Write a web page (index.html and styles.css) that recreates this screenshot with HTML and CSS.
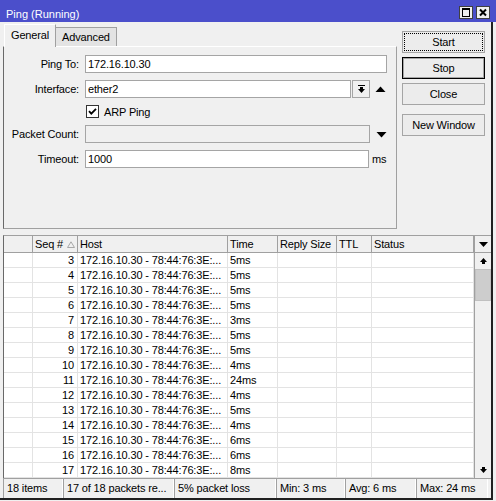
FILE: index.html
```html
<!DOCTYPE html>
<html>
<head>
<meta charset="utf-8">
<link rel="stylesheet" href="styles.css">
</head>
<body>
<div class="window">
  <div class="titlebar">
    <span class="title">Ping (Running)</span>
    <div class="tb-btns">
      <svg class="tb-btn" width="14" height="13" viewBox="0 0 14 13">
        <rect x="0.5" y="0.5" width="13" height="12" fill="#f0f0f0" stroke="#404040"/>
        <rect x="3.5" y="2.5" width="7" height="8" fill="none" stroke="#000"/>
        <rect x="3" y="2" width="8" height="2" fill="#000"/>
      </svg>
      <svg class="tb-btn" width="14" height="13" viewBox="0 0 14 13">
        <rect x="0.5" y="0.5" width="13" height="12" fill="#f0f0f0" stroke="#404040"/>
        <path d="M4 3.5 L10 9.5 M10 3.5 L4 9.5" stroke="#000" stroke-width="2"/>
      </svg>
    </div>
  </div>
  <div class="client">
    <div class="top">
      <div class="tabarea">
        <div class="tabs">
          <div class="tab active">General</div>
          <div class="tab">Advanced</div>
        </div>
        <div class="panel">
          <div class="row">
            <div class="lbl">Ping To:</div>
            <div class="input w-ping">172.16.10.30</div>
          </div>
          <div class="row">
            <div class="lbl">Interface:</div>
            <div class="input w-iface">ether2</div>
            <div class="ddbtn">
              <svg width="9" height="9" viewBox="0 0 9 9"><rect x="1" y="0" width="7" height="1" fill="#000"/><path d="M3 2 H6 V4 H8 L4.5 8 L1 4 H3 Z" fill="#000"/></svg>
            </div>
            <svg class="tri" width="11" height="7" viewBox="0 0 11 7"><path d="M0.5 6 L5.5 0.5 L10.5 6 Z" fill="#000"/></svg>
          </div>
          <div class="row row-check">
            <div class="lbl"></div>
            <svg class="check" width="13" height="13" viewBox="0 0 13 13">
              <rect x="0.5" y="0.5" width="12" height="12" fill="#fff" stroke="#333"/>
              <path d="M3 6.2 L5.3 8.6 L10 3.8" fill="none" stroke="#000" stroke-width="1.8"/>
            </svg>
            <span class="check-lbl">ARP Ping</span>
          </div>
          <div class="row">
            <div class="lbl">Packet Count:</div>
            <div class="input disabled w-count"></div>
            <svg class="tri tri-down" width="11" height="7" viewBox="0 0 11 7"><path d="M0.5 1 L5.5 6.5 L10.5 1 Z" fill="#000"/></svg>
          </div>
          <div class="row">
            <div class="lbl">Timeout:</div>
            <div class="input w-timeout">1000</div>
            <span class="unit">ms</span>
          </div>
        </div>
      </div>
      <div class="btns">
        <div class="btn focus">Start</div>
        <div class="btn default">Stop</div>
        <div class="btn">Close</div>
        <div class="btn btn-new">New Window</div>
      </div>
    </div>
    <div class="table">
      <div class="grid">
        <div class="hdr">
          <div></div>
          <div class="seq-h">Seq #<svg class="sort" width="8" height="7" viewBox="0 0 8 7"><path d="M0.5 6.5 L4 0.8 L7.5 6.5 Z" fill="none" stroke="#a8a8a8"/></svg></div>
          <div>Host</div>
          <div>Time</div>
          <div>Reply Size</div>
          <div>TTL</div>
          <div>Status</div>
        </div>
        <div class="trow"><div></div><div class="num">3</div><div>172.16.10.30 - 78:44:76:3E:...</div><div>5ms</div><div></div><div></div><div></div></div>
        <div class="trow"><div></div><div class="num">4</div><div>172.16.10.30 - 78:44:76:3E:...</div><div>5ms</div><div></div><div></div><div></div></div>
        <div class="trow"><div></div><div class="num">5</div><div>172.16.10.30 - 78:44:76:3E:...</div><div>5ms</div><div></div><div></div><div></div></div>
        <div class="trow"><div></div><div class="num">6</div><div>172.16.10.30 - 78:44:76:3E:...</div><div>5ms</div><div></div><div></div><div></div></div>
        <div class="trow"><div></div><div class="num">7</div><div>172.16.10.30 - 78:44:76:3E:...</div><div>3ms</div><div></div><div></div><div></div></div>
        <div class="trow"><div></div><div class="num">8</div><div>172.16.10.30 - 78:44:76:3E:...</div><div>5ms</div><div></div><div></div><div></div></div>
        <div class="trow"><div></div><div class="num">9</div><div>172.16.10.30 - 78:44:76:3E:...</div><div>5ms</div><div></div><div></div><div></div></div>
        <div class="trow"><div></div><div class="num">10</div><div>172.16.10.30 - 78:44:76:3E:...</div><div>4ms</div><div></div><div></div><div></div></div>
        <div class="trow"><div></div><div class="num">11</div><div>172.16.10.30 - 78:44:76:3E:...</div><div>24ms</div><div></div><div></div><div></div></div>
        <div class="trow"><div></div><div class="num">12</div><div>172.16.10.30 - 78:44:76:3E:...</div><div>4ms</div><div></div><div></div><div></div></div>
        <div class="trow"><div></div><div class="num">13</div><div>172.16.10.30 - 78:44:76:3E:...</div><div>5ms</div><div></div><div></div><div></div></div>
        <div class="trow"><div></div><div class="num">14</div><div>172.16.10.30 - 78:44:76:3E:...</div><div>4ms</div><div></div><div></div><div></div></div>
        <div class="trow"><div></div><div class="num">15</div><div>172.16.10.30 - 78:44:76:3E:...</div><div>6ms</div><div></div><div></div><div></div></div>
        <div class="trow"><div></div><div class="num">16</div><div>172.16.10.30 - 78:44:76:3E:...</div><div>6ms</div><div></div><div></div><div></div></div>
        <div class="trow"><div></div><div class="num">17</div><div>172.16.10.30 - 78:44:76:3E:...</div><div>8ms</div><div></div><div></div><div></div></div>
      </div>
      <div class="sb">
        <div class="sb-head"><svg width="9" height="5" viewBox="0 0 9 5"><path d="M0 0 H9 L4.5 5 Z" fill="#000"/></svg></div>
        <div class="sb-btn"><svg width="7" height="6" viewBox="0 0 7 6"><path d="M0 4 L3.5 0 L7 4 Z M2 4 H5 V6 H2 Z" fill="#000"/></svg></div>
        <div class="sb-thumb"></div>
        <div class="sb-track"></div>
        <div class="sb-btn"><svg width="7" height="6" viewBox="0 0 7 6"><path d="M2 0 H5 V2 H2 Z M0 2 L7 2 L3.5 6 Z" fill="#000"/></svg></div>
      </div>
    </div>
    <div class="status">
      <div class="sp w1">18 items</div>
      <div class="sp w2">17 of 18 packets re...</div>
      <div class="sp w3">5% packet loss</div>
      <div class="sp w4">Min: 3 ms</div>
      <div class="sp w5">Avg: 6 ms</div>
      <div class="sp w6">Max: 24 ms</div>
    </div>
  </div>
</div>
</body>
</html>
```
FILE: styles.css
```css
* { box-sizing: border-box; }
body {
  margin: 0;
  background: #f0f0f0;
  font-family: "Liberation Sans", Arial, sans-serif;
  font-size: 11px;
  letter-spacing: -0.15px;
  color: #000;
}
.window {
  width: 496px;
  height: 501px;
  display: flex;
  flex-direction: column;
  overflow: hidden;
}
.titlebar {
  height: 22px;
  flex: none;
  background: #4b4fcb;
  color: #fff;
  display: flex;
  padding-left: 6px;
}
.title {
  font-size: 11px;
  letter-spacing: 0;
  line-height: 14px;
  padding-top: 7px;
}
.tb-btns {
  margin-left: auto;
  margin-right: 6px;
  padding-top: 6px;
  display: flex;
  gap: 3px;
}
.tb-btn { display: block; }
.client {
  width: 493px;
  height: 478px;
  flex: none;
  border-right: 2px solid #202020;
  border-bottom: 2px solid #202020;
  padding-left: 3px;
  display: flex;
  flex-direction: column;
}
.top {
  height: 213px;
  flex: none;
  display: flex;
}
.tabarea {
  width: 394px;
  padding-top: 2px;
  display: flex;
  flex-direction: column;
}
.tabs {
  height: 22px;
  display: flex;
  align-items: flex-end;
  padding-left: 1px;
}
.tab {
  height: 19px;
  padding: 0 6px;
  line-height: 18px;
  background: #e3e3e3;
  border-top: 1px solid #a0a0a0;
  border-right: 1px solid #a0a0a0;
}
.tab.active {
  height: 23px;
  line-height: 20px;
  margin-bottom: -1px;
  background: #f0f0f0;
  border-top: 1px solid #fff;
  border-left: 1px solid #fff;
  border-right: 1px solid #a0a0a0;
  position: relative;
  z-index: 1;
}
.panel {
  height: 183px;
  border: 1px solid #a0a0a0;
  border-top-color: #fff;
  border-left-color: #696969;
  padding-top: 8px;
  display: flex;
  flex-direction: column;
  gap: 7px;
}
.row {
  height: 18px;
  display: flex;
  align-items: center;
}
.row-check { height: 13px; }
.lbl {
  width: 75px;
  margin-right: 6px;
  text-align: right;
  white-space: nowrap;
}
.input {
  height: 18px;
  border: 1px solid #a5a5a5;
  background: #fff;
  padding-left: 2px;
  line-height: 16px;
}
.input.disabled { background: #f0f0f0; }
.w-ping { width: 302px; }
.w-iface { width: 266px; }
.w-count { width: 285px; }
.w-timeout { width: 284px; }
.ddbtn {
  width: 18px;
  height: 18px;
  margin-left: 1px;
  border: 1px solid #a5a5a5;
  background: #f0f0f0;
  display: flex;
  align-items: center;
  justify-content: center;
}
.ddbtn svg { display: block; }
.tri { display: block; margin-left: 5px; }
.tri-down { margin-left: 6px; }
.check { display: block; margin-left: 1px; }
.check-lbl { margin-left: 5px; }
.unit { margin-left: 3px; }
.btns {
  width: 83px;
  margin-left: 5px;
  padding-top: 9px;
  display: flex;
  flex-direction: column;
  gap: 4px;
}
.btn {
  height: 22px;
  border: 1px solid #a5a5a5;
  background: #ececec;
  text-align: center;
  line-height: 20px;
}
.btn.focus {
  outline: 1px dotted #000;
  outline-offset: -3px;
}
.btn.default {
  border-color: #000;
  box-shadow: inset 0 0 0 1px #a5a5a5;
}
.btn-new { margin-top: 5px; }
.table {
  height: 243px;
  flex: none;
  border-left: 1px solid #696969;
  border-top: 1px solid #a0a0a0;
  display: flex;
  background: #fff;
}
.grid { width: 470px; }
.hdr, .trow {
  display: grid;
  grid-template-columns: 29px 45px 150px 50px 59px 35px 102px;
}
.hdr {
  height: 17px;
  background: #f0f0f0;
  border-bottom: 1px solid #a0a0a0;
}
.hdr > div {
  border-right: 1px solid #a0a0a0;
  padding-left: 2px;
  line-height: 16px;
  white-space: nowrap;
}
.hdr > div.seq-h {
  display: flex;
  align-items: center;
}
.sort { display: block; margin-left: 4px; }
.trow {
  height: 15px;
  border-bottom: 1px solid #e3e3e3;
}
.trow > div {
  border-right: 1px solid #e3e3e3;
  padding-left: 2px;
  line-height: 14px;
  white-space: nowrap;
  overflow: hidden;
}
.trow > div.num {
  text-align: right;
  padding-right: 3px;
}
.sb {
  width: 17px;
  display: flex;
  flex-direction: column;
  background: #f0f0f0;
  border-left: 1px solid #a0a0a0;
}
.sb-head {
  height: 17px;
  border-bottom: 1px solid #a0a0a0;
  display: flex;
  align-items: center;
  justify-content: center;
}
.sb-btn {
  height: 16px;
  display: flex;
  align-items: center;
  justify-content: center;
}
.sb svg { display: block; }
.sb-thumb {
  height: 32px;
  background: #cdcdcd;
  border: 1px solid #c0c0c0;
}
.sb-track { flex: 1; }
.status {
  height: 20px;
  flex: none;
  display: flex;
  border-top: 1px solid #a0a0a0;
}
.sp {
  border-left: 1px solid #a0a0a0;
  border-right: 1px solid #fff;
  padding-left: 3px;
  line-height: 18px;
  white-space: nowrap;
}
.w1 { width: 60px; }
.w2 { width: 111px; }
.w3 { width: 102px; }
.w4 { width: 69px; }
.w5 { width: 71px; }
.w6 { width: 72px; }
```
